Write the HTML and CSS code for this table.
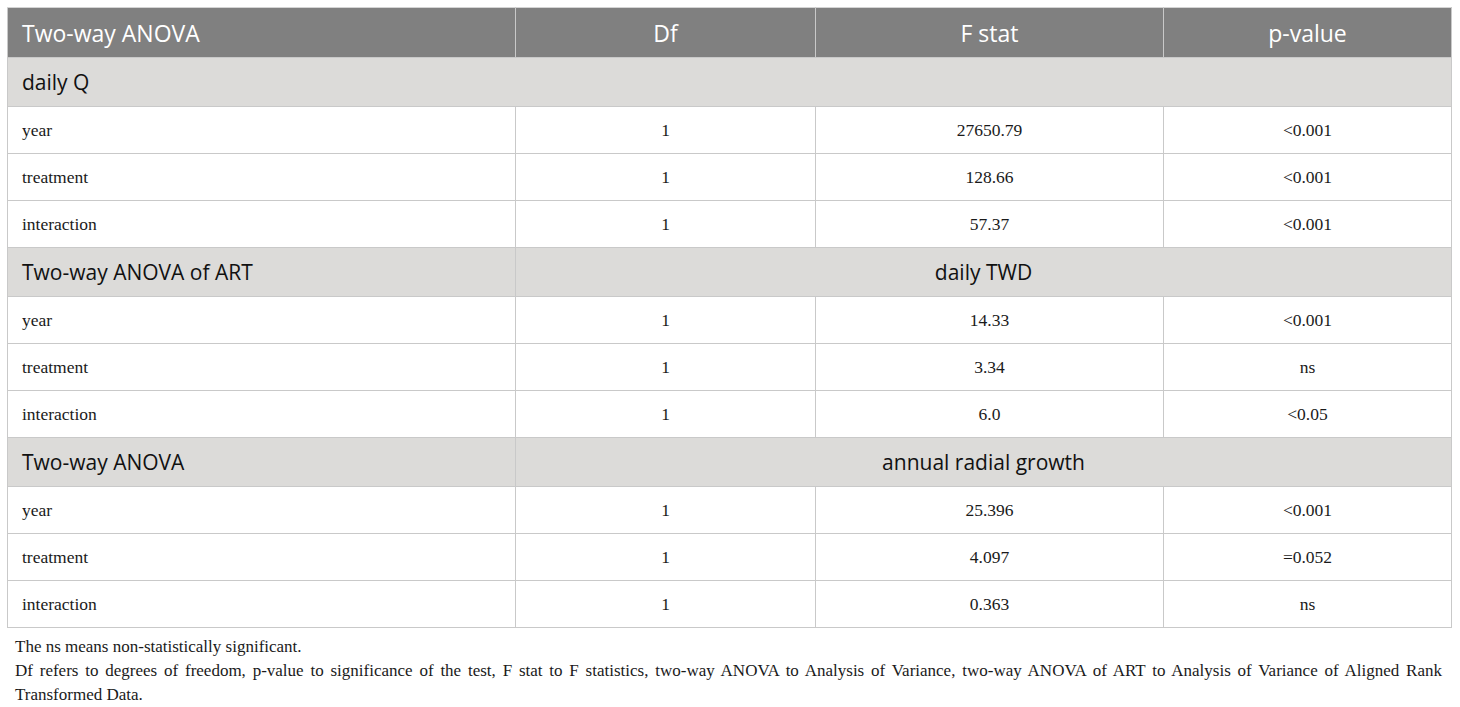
FILE: index.html
```html
<!DOCTYPE html>
<html lang="en">
	<head>
		<meta charset="UTF-8" />
		<meta name="viewport" content="width=device-width, initial-scale=1.0" />
		<title>Two-way ANOVA</title>
		<link rel="stylesheet" href="styles.css">
	</head>
	<body>
		<div class="wrap">
			<table class="anova">
				<colgroup>
					<col class="c1">
					<col class="c2">
					<col class="c3">
					<col class="c4">
				</colgroup>
				<thead>
					<tr>
						<th class="left">Two-way ANOVA</th>
						<th>Df</th>
						<th>F stat</th>
						<th>p-value</th>
					</tr>
				</thead>
				<tbody>
					<tr class="section">
						<td colspan="4">daily Q</td>
					</tr>
					<tr><td>year</td><td>1</td><td>27650.79</td><td>&lt;0.001</td></tr>
					<tr><td>treatment</td><td>1</td><td>128.66</td><td>&lt;0.001</td></tr>
					<tr><td>interaction</td><td>1</td><td>57.37</td><td>&lt;0.001</td></tr>
					<tr class="section">
						<td>Two-way ANOVA of ART</td>
						<td colspan="3" class="mid">daily TWD</td>
					</tr>
					<tr><td>year</td><td>1</td><td>14.33</td><td>&lt;0.001</td></tr>
					<tr><td>treatment</td><td>1</td><td>3.34</td><td>ns</td></tr>
					<tr><td>interaction</td><td>1</td><td>6.0</td><td>&lt;0.05</td></tr>
					<tr class="section">
						<td>Two-way ANOVA</td>
						<td colspan="3" class="mid">annual radial growth</td>
					</tr>
					<tr><td>year</td><td>1</td><td>25.396</td><td>&lt;0.001</td></tr>
					<tr><td>treatment</td><td>1</td><td>4.097</td><td>=0.052</td></tr>
					<tr><td>interaction</td><td>1</td><td>0.363</td><td>ns</td></tr>
				</tbody>
			</table>
			<div class="notes">
				<p>The ns means non-statistically significant.</p>
				<p>Df refers to degrees of freedom, p-value to significance of the test, F stat to F statistics, two-way ANOVA to Analysis of Variance, two-way ANOVA of ART to Analysis of Variance of Aligned Rank Transformed Data.</p>
			</div>
		</div>
	</body>
</html>
```

FILE: styles.css
```css
body {
	margin: 0;
	background-color: #fff;
	color: #1a1a1a;
}
.wrap {
	padding: 7px 8px 0 7px;
}
.anova {
	width: 100%;
	border-collapse: collapse;
	table-layout: fixed;
	font-family: "Liberation Serif", "Times New Roman", serif;
	font-size: 17.5px;
}
.c1 { width: 508px; }
.c2 { width: 300px; }
.c3 { width: 348px; }
.anova th,
.anova td {
	border: 1px solid #c9c9c9;
	padding: 0 14px;
	text-align: center;
	height: 46px;
}
.anova td:first-child {
	text-align: left;
}
.anova th {
	background-color: #808080;
	color: #fff;
	font-family: "Open Sans", "Noto Sans", sans-serif;
	font-weight: normal;
	font-size: 23px;
	height: 49px;
	border-top-color: #d4d4d4;
}
.anova th.left {
	text-align: left;
}
/* group rows in grey */
.anova tr.section td {
	background-color: #dcdbd9;
	font-family: "Open Sans", "Noto Sans", sans-serif;
	font-size: 21px;
	color: #111;
	height: 48px;
}
.anova tr.section td.mid {
	text-align: center;
}
.notes {
	font-family: "Liberation Serif", "Times New Roman", serif;
	font-size: 17px;
	padding: 7px 10px 0 8px;
	line-height: 24px;
	text-align: justify;
}
.notes p {
	margin: 0;
}
```
